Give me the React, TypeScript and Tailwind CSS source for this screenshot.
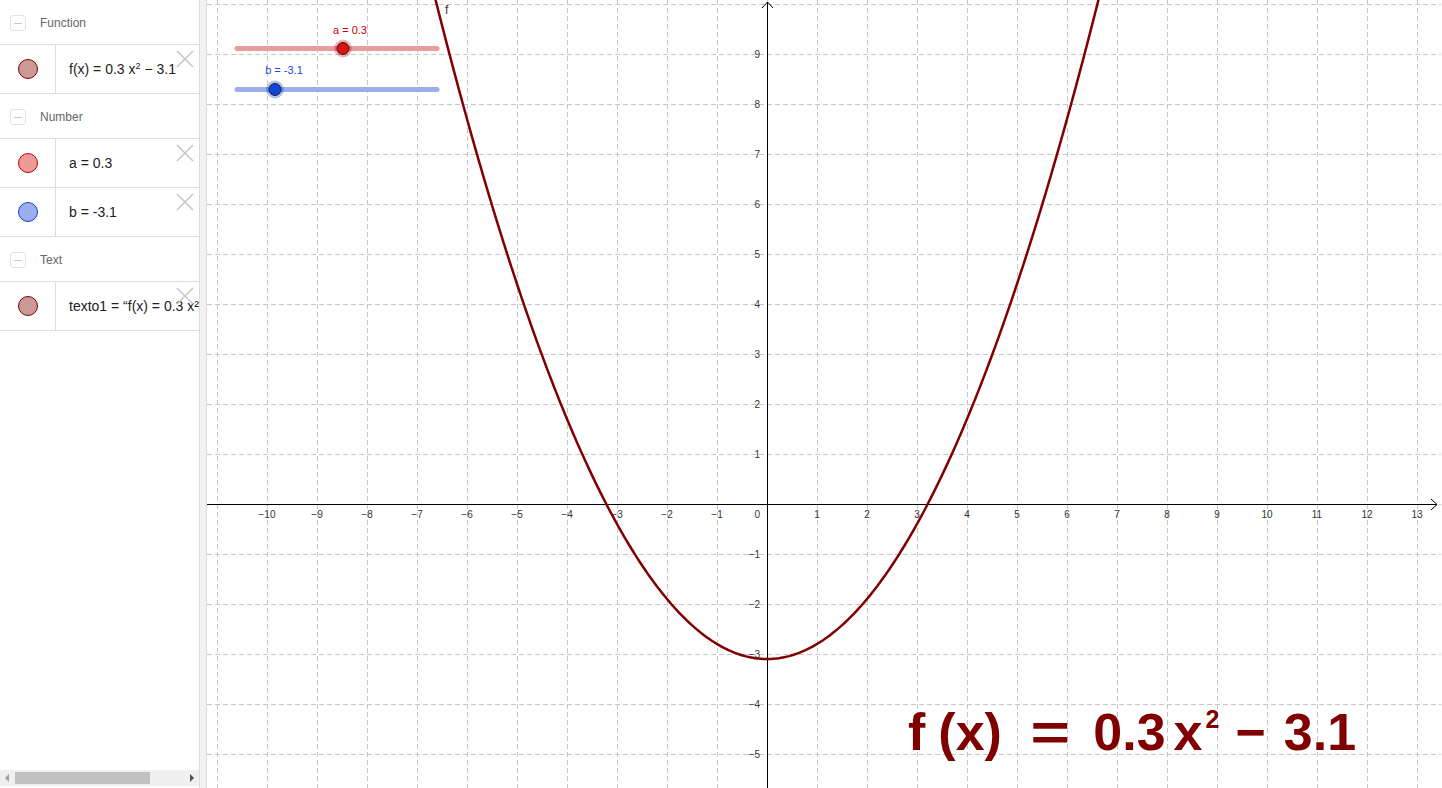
const OX = 768;
const OY = 504;
const U = 50;

type Item = {
  label: string;
  fill: string;
  stroke: string;
  text: React.ReactNode;
};

const groups: { title: string; items: Item[] }[] = [
  {
    title: "Function",
    items: [
      {
        label: "f",
        fill: "#cc9999",
        stroke: "#800000",
        text: (
          <span>
            f(x)&nbsp;= 0.3 x<sup className="text-[9px]">2</sup> − 3.1
          </span>
        ),
      },
    ],
  },
  {
    title: "Number",
    items: [
      { label: "a", fill: "#ee9a9a", stroke: "#cc0000", text: "a = 0.3" },
      { label: "b", fill: "#9aaeee", stroke: "#1a3fcc", text: "b = -3.1" },
    ],
  },
  {
    title: "Text",
    items: [
      {
        label: "texto1",
        fill: "#cc9999",
        stroke: "#800000",
        text: "texto1 = “f(x) = 0.3 x² − 3.1”",
      },
    ],
  },
];

function CloseIcon() {
  return (
    <svg
      className="absolute right-[5px] top-[5px]"
      width="18"
      height="18"
      viewBox="0 0 18 18"
    >
      <path d="M1 1 L17 17 M17 1 L1 17" stroke="#c8c8c8" strokeWidth="1.6" />
    </svg>
  );
}

function AlgebraRow({ item }: { item: Item }) {
  return (
    <div className="relative flex h-[49px] border-b border-[#dddddd]">
      <div className="flex w-[56px] shrink-0 items-center justify-center border-r border-[#dddddd]">
        <span
          className="block h-[20px] w-[20px] rounded-full border"
          style={{ background: item.fill, borderColor: item.stroke }}
        />
      </div>
      <div className="flex flex-1 items-center overflow-hidden whitespace-nowrap pl-[13px] text-[14px] text-[#222]">
        {item.text}
      </div>
      <CloseIcon />
    </div>
  );
}

function AlgebraView() {
  return (
    <div className="flex w-[200px] shrink-0 flex-col border-r border-[#dcdcdc] bg-white">
      <div className="flex-1">
        {groups.map((g) => (
          <div key={g.title}>
            <div className="flex h-[45px] items-center gap-[14px] border-b border-[#dddddd] pl-[10px] pt-[2px]">
              <span className="flex h-[16px] w-[16px] items-center justify-center rounded-[3px] border border-[#e2e2e2]">
                <span className="block h-px w-[8px] bg-[#c8c8c8]" />
              </span>
              <span className="text-[12px] text-[#666]">{g.title}</span>
            </div>
            {g.items.map((it) => (
              <AlgebraRow key={it.label} item={it} />
            ))}
          </div>
        ))}
      </div>
      <div className="mb-[2px] flex h-[16px] items-center bg-[#f0f0f0] px-[4px]">
        <svg width="6" height="8" viewBox="0 0 6 8">
          <path d="M5 0 L1 4 L5 8 Z" fill="#a0a0a0" />
        </svg>
        <div className="ml-[5px] h-[12px] w-[135px] bg-[#c1c1c1]" />
        <div className="flex-1" />
        <svg width="6" height="8" viewBox="0 0 6 8">
          <path d="M1 0 L5 4 L1 8 Z" fill="#505050" />
        </svg>
      </div>
    </div>
  );
}

function Graph() {
  const vx: number[] = [];
  for (let k = -11; k <= 13; k++) vx.push(OX + U * k);
  const hy: number[] = [];
  for (let k = -5; k <= 10; k++) hy.push(OY - U * k);

  const pts: string[] = [];
  for (let px = 420; px <= 1120; px += 2) {
    const x = (px - OX) / U;
    const y = 0.3 * x * x - 3.1;
    pts.push(`${px},${(OY - U * y).toFixed(2)}`);
  }

  const xLabels: number[] = [];
  for (let k = -10; k <= 13; k++) if (k !== 0) xLabels.push(k);
  const yLabels: number[] = [];
  for (let k = -5; k <= 9; k++) if (k !== 0) yLabels.push(k);

  const fmt = (n: number) => (n < 0 ? `−${-n}` : `${n}`);

  return (
    <div className="relative flex-1 overflow-hidden bg-white">
      <svg
        className="absolute left-0 top-0"
        width="1234"
        height="788"
        viewBox="208 0 1234 788"
        style={{ fontFamily: "'Liberation Sans', Arial, sans-serif" }}
      >
        {vx.map((x) => (
          <line
            key={`v${x}`}
            x1={x + 0.5}
            y1={0}
            x2={x + 0.5}
            y2={788}
            stroke="#c6c6c6"
            strokeDasharray="5 3"
          />
        ))}
        {hy.map((y) => (
          <line
            key={`h${y}`}
            x1={208}
            y1={y + 0.5}
            x2={1442}
            y2={y + 0.5}
            stroke="#c6c6c6"
            strokeDasharray="5 3"
          />
        ))}
        {/* axes */}
        <line x1={208} y1={OY + 0.5} x2={1438} y2={OY + 0.5} stroke="#000" />
        <path d="M1432 499 L1438 504.5 L1432 510" fill="none" stroke="#000" />
        <line x1={OX + 0.5} y1={2} x2={OX + 0.5} y2={788} stroke="#000" />
        <path d="M763 8 L768.5 2 L774 8" fill="none" stroke="#000" />

        {xLabels.map((k) => (
          <text
            key={`xl${k}`}
            x={OX + U * k}
            y={518}
            fontSize={10}
            textAnchor="middle"
            fill="#333"
          >
            {fmt(k)}
          </text>
        ))}
        <text x={761} y={518} fontSize={10} textAnchor="end" fill="#333">
          0
        </text>
        {yLabels.map((k) => (
          <text
            key={`yl${k}`}
            x={761}
            y={OY - U * k + 3.5}
            fontSize={10}
            textAnchor="end"
            fill="#333"
          >
            {fmt(k)}
          </text>
        ))}

        <polyline
          points={pts.join(" ")}
          fill="none"
          stroke="#800000"
          strokeWidth={2.5}
        />
        <text x={446} y={14} fontSize={12} fill="#333">
          f
        </text>

        {/* slider a */}
        <line
          x1={238}
          y1={48.5}
          x2={438}
          y2={48.5}
          stroke="#e99d9d"
          strokeWidth={5}
          strokeLinecap="round"
        />
        <circle cx={344} cy={48.5} r={9} fill="#cc0000" opacity={0.3} />
        <circle cx={344} cy={48.5} r={6} fill="#dd1111" stroke="#222" />
        <text x={351} y={34} fontSize={11} textAnchor="middle" fill="#cc0000">
          a = 0.3
        </text>

        {/* slider b */}
        <line
          x1={238}
          y1={89.5}
          x2={438}
          y2={89.5}
          stroke="#9daeec"
          strokeWidth={5}
          strokeLinecap="round"
        />
        <circle cx={276} cy={89.5} r={9} fill="#0033cc" opacity={0.3} />
        <circle cx={276} cy={89.5} r={6} fill="#1144dd" stroke="#222" />
        <text x={285} y={74} fontSize={11} textAnchor="middle" fill="#1a4dd8">
          b = -3.1
        </text>
      </svg>

      <div className="absolute left-[701px] top-[706px] whitespace-nowrap font-['Liberation_Sans',Arial,sans-serif] text-[52px] font-bold leading-none text-[#800000]">
        <span>f</span>
        <span className="ml-[13px]">(x)</span>
        <span className="ml-[33px] inline-block scale-x-[1.3]">=</span>
        <span className="ml-[28px]">0.3</span>
        <span className="ml-[8px]">x</span>
        <span className="ml-[3px] align-[22px] text-[25px]">2</span>
        <span className="ml-[16px]">−</span>
        <span className="ml-[18px]">3.1</span>
      </div>
    </div>
  );
}

export default function App() {
  return (
    <div className="flex h-[788px] w-[1442px] overflow-hidden bg-white font-['Liberation_Sans',Arial,sans-serif]">
      <AlgebraView />
      <div className="w-[7px] shrink-0 border-r border-[#dcdcdc] bg-[#f2f2f2]" />
      <Graph />
    </div>
  );
}
